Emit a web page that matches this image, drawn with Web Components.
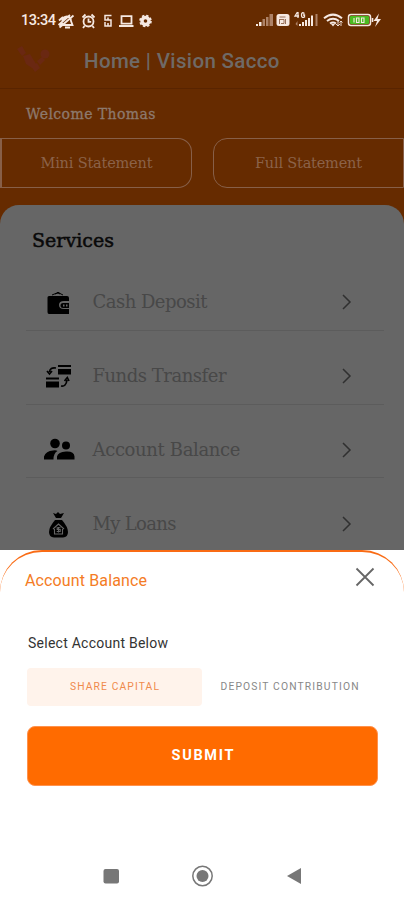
<!DOCTYPE html>
<html lang="en"><head><meta charset="utf-8"><title>Vision Sacco</title>
<style>
html,body{margin:0;height:900px;overflow:hidden;background:#fff}
body{font-family:Roboto,"Liberation Sans",sans-serif}
</style></head><body><sacco-app></sacco-app>
<script>
const define = (name, html, ready) => customElements.define(name, class extends HTMLElement {
  connectedCallback() {
    if (this.shadowRoot) return;
    this.attachShadow({mode: 'open'}).innerHTML = html;
    if (ready) ready(this, this.shadowRoot);
  }
});

/* One line of text whose tracking is spread to a given width. */
define('fit-text', `<style>:host{display:block;white-space:nowrap;line-height:1}
:host([slab]){font-family:"Roboto Slab","DejaVu Serif",serif}
span{display:inline-block}</style><span><slot></slot></span>`, (el, root) => {
  const s = root.querySelector('span');
  const target = +el.getAttribute('w'), n = el.textContent.length;
  const gap = (target - s.getBoundingClientRect().width) / (n - 1);
  s.style.letterSpacing = gap + 'px';
  s.style.marginRight = -gap + 'px';
});

define('status-bar', `<style>:host{display:flex;justify-content:space-between;align-items:center;height:40px;padding:0 20px 0 21px;box-sizing:border-box;color:#f6e9e2}
.l,.r{display:flex;align-items:center}fit-text{font-size:14.5px;font-weight:500;padding-top:2px}svg{display:block;fill:none;stroke:#f6e9e2}.l svg{margin-top:2px}.r{padding-top:1px}</style>
<div class="l"><fit-text w="35">13:34</fit-text>
<svg width="96" height="18" viewBox="0 0 96 18" stroke-width="1.8">
<path d="M5 13Q6.500 11 6.500 8Q7 5 11 4.500Q15 5 15 9L16.500 13ZM9 15.500h5M3.500 15.500L17.500 3.500M2.500 13L14 3M3 8.500L7 5"/>
<circle cx="32.500" cy="9.500" r="5"/><path d="M32.500 6.500v3.300h2.700M26.500 5.500l3-3M38.500 5.500l-3-3M28.500 14l-1.500 2M36.500 14l1.500 2"/>
<path d="M55.500 3.500h-6.500v4.500h6v6h-6v-4M52 5.500v3M52 11v3" stroke-width="1.500"/>
<path d="M65.500 4.200h10v7.500h-10zM63 14h14.500"/>
<circle cx="89.500" cy="9" r="3.500" stroke-width="3.400"/><circle cx="89.500" cy="9" r="5.400" stroke-width="1.800" stroke-dasharray="2.400 1.840"/></svg></div>
<div class="r"><svg width="129" height="22" viewBox="0 0 129 22">
<g stroke="none" fill="#f6e9e2"><path d="M1 16h2v-2H1zM4 16h2.500v-4H4z"/><path d="M7.500 16h2.500V9H7.500zM11 16h2.500V7H11zM14.500 16H18V4h-3.500z" fill="#ad8267"/>
<rect x="21.500" y="4" width="13" height="12" rx="2.500"/>
<path d="M44 16h2v-2h-2zM47 16h2v-4h-2zM50 16h2v-6h-2zM53 16h2V8h-2zM56 16h2V5.500h-2z"/><path d="M60.500 16h2V4h-2z" fill="#ad8267"/>
<path d="M40.500 14l2-3v5z" fill="#ad8267"/>
<path d="M124 3.500l-5.500 7.500h3.500l-2 6 6-8h-3.500z"/></g>
<path d="M24.500 7h6M25 9.500h4v4h-3M30.500 9v5M24.500 9v5" stroke="#98715a"/>
<path d="M42.500 2l-2.500 4h4M43 2v6M49.500 3.500q-3-2-3 1.500t3 2v-2h-1.500" stroke-width="1.300"/>
<path d="M69 8.200Q78 1 87 8.200M72 11Q78 6.500 84 11M75 13.500q3-2.200 6 0" stroke-width="2"/><path d="M76 14h4l-2 2.500z" fill="#f6e9e2" stroke="none"/><path d="M83 10v6M81 14l2 2 2-2M86 16v-5M84.500 12.500l1.500-1.500 1.500 1.500" stroke-width=".9"/>
<rect x="93.500" y="4.500" width="22" height="11" rx="2.500" stroke-width="1.500"/><rect x="95" y="6" width="19" height="8" rx="1" fill="#4abb20" stroke="none"/><path d="M117.500 8v4" stroke-width="1.600"/>
<path d="M99 8v4.500M101.500 8h2.500v4.500h-2.500zM106.500 8h2.500v4.500h-2.500z" stroke-width="1.100"/></svg></div>`);

define('app-header', `<style>:host{display:block;height:89px;box-sizing:border-box;background:#662b00;border-bottom:1px solid #592400}
.row{display:flex;align-items:center;height:42px}svg{display:block;margin-left:17px;width:67px}fit-text{font-size:20.500px;font-weight:500;color:#6f6a67}</style>
<status-bar></status-bar><div class="row"><svg height="34" viewBox="0 0 67 34"><g fill="#6a2812"><path d="M0 5l5-3 4 7-4 3zM6 12l7-2 6 10-4 4-6-4zM14 22l6-3 3 5-5 4z"/><circle cx="28" cy="10" r="4.500"/><path d="M20 17l5-4 3 3-5 5z"/></g></svg><fit-text w="195.500">Home | Vision Sacco</fit-text></div>`);

define('statement-button', `<style>:host{display:flex;align-items:center;justify-content:center;box-sizing:border-box;height:50px;border:1.500px solid #875f48;font-size:14.500px;color:#8b6249}
:host([left]){width:192px;border-radius:0 14px 14px 0;border-left-width:2px}:host([right]){width:191px;border-radius:14px 0 0 14px;border-right-width:1px}</style><slot></slot>`);

const icons = {
deposit:'<path d="M5 9h18q2 0 2 2v3h-5q-5 0-5 4t5 4h5v5H5q-1.500 0-1.500-2V10.500Q3.500 9 5 9z"/><path d="M8 8l6-2.500L19 8M11 7l3-1 2 1M13 5.500h2l1 1" fill="none" stroke="#000"/><path d="M19 16h6v5h-6q-2.500 0-2.500-2.500T19 16zm0 1.500v2h1.500v-2zm3 0v2h1.500v-2z" fill-rule="evenodd"/>',
transfer:'<rect x="14" y="4" width="13" height="2"/><rect x="14" y="8" width="13" height="5.500"/><rect x="2" y="16.500" width="13" height="2"/><rect x="2" y="20.500" width="13" height="6"/><path d="M12 7Q6 6 5.500 11M3 10l2.500 3L8 10M17 25q5 1 6-6M20.500 20l2.800-3.500L25 20" fill="none" stroke="#000" stroke-width="1.700"/>',
people:'<circle cx="11" cy="8.500" r="4.800"/><circle cx="22" cy="10.500" r="4"/><path d="M0 24.500v-3Q2 16 9 15.500q3-.500 4.500.500-4 2-4 8.500zM13 24.500v-3q1-4.500 9-5T30.500 21.500v3z"/>',
loans:'<path d="M9 4l3 1 2-2 2 2 4-1-3 5h-5z"/><path d="M11 11h7Q24 18 24 23t-5 5.500h-9Q5 28 5 23t6-12z"/><path d="M9 20l5.500-5 5.500 5M10.500 20v5h8v-5M14.500 18v5.500M12.700 22.500h3.500v-2h-3v-1.800h3.300" fill="none" stroke="#666" stroke-width="1.100"/>'};

define('service-row', `<style>:host{display:flex;align-items:center;box-sizing:border-box;height:55.800px;margin:0 20px 18px 26px;padding:0 31px 0 17.500px;border-bottom:1px solid #5c5c5c;color:#484848;font-size:18px}
.i{width:49px}.i svg{overflow:visible;display:block}.t{flex:1}svg{display:block}</style>
<div class="i"><svg width="30" height="30" viewBox="0 0 30 30"></svg></div><div class="t"><slot></slot></div><svg width="12" height="18" viewBox="0 0 12 18" fill="none" stroke="#303030" stroke-width="1.500"><path d="M2 2l7 7-7 7"/></svg>`,
(el, root) => { root.querySelector('.i svg').innerHTML = icons[el.getAttribute('icon')]; });

define('account-option', `<style>:host{display:flex;align-items:center;justify-content:center;width:175px;height:38px;border-radius:4px;font-size:10.300px;color:#888}:host([selected]){background:#fff3eb;color:#ef8a4b}</style><slot></slot>`);

define('account-sheet', `<style>:host{display:block;height:350px;background:#fff}
.panel{height:300px;box-sizing:border-box;border-top:2.500px solid #f96b14;border-radius:42px 42px 0 0}
.head{display:flex;justify-content:space-between;align-items:center;padding:17px 29px 0 25px;height:24px;color:#f47c25;font-size:16px}
.body{padding:43px 26px 0 27px;color:#333;font-size:14px}.opts{display:flex;margin-top:18px}
.submit{display:flex;align-items:center;justify-content:center;height:60px;box-sizing:border-box;margin-top:20px;background:#ff6b00;border:1px solid #ff924d;border-radius:8px;color:#fff;font-size:14.500px;font-weight:700}
nav{height:50px;display:flex;justify-content:center}svg{display:block}.sel{padding-left:1px}</style>
<div class="panel"><div class="head"><fit-text w="122">Account Balance</fit-text><svg width="20" height="20" viewBox="0 0 20 20" style="margin-top:-8px" stroke="#666" stroke-width="1.800"><path d="M1.500 1.500l17 17M18.500 1.500l-17 17"/></svg></div>
<div class="body"><fit-text class="sel" w="140">Select Account Below</fit-text><div class="opts"><account-option selected><fit-text w="89">SHARE CAPITAL</fit-text></account-option><account-option><fit-text w="138">DEPOSIT CONTRIBUTION</fit-text></account-option></div><div class="submit"><fit-text w="62">SUBMIT</fit-text></div></div></div>
<nav><svg width="404" height="50" viewBox="0 0 404 50"><rect x="103.500" y="19" width="15.500" height="14.500" rx="2" fill="#777"/><circle cx="202.500" cy="26" r="9.700" fill="none" stroke="#777" stroke-width="1.500"/><circle cx="202.500" cy="26" r="6" fill="#777"/><path d="M301 18v16l-14-8z" fill="#777"/></svg></nav>`);

define('sacco-app', `<style>:host{display:flex;flex-direction:column;width:404px;height:900px;overflow:hidden;background:#662b00}
.home{height:461px;flex:none;overflow:hidden}.welcome{font-size:14px;color:#8d796d;padding:18px 0 0 26px;-webkit-text-stroke:.3px}
.btns{display:flex;justify-content:space-between;margin-top:17px}.card{margin-top:17px;height:360px;background:#666;border-radius:19px 19px 0 0;padding-top:26px}
.title{font-size:19px;color:#090909;padding:0 0 25px 32px;-webkit-text-stroke:.5px}account-sheet{flex:none}</style>
<app-header></app-header><div class="home"><fit-text slab class="welcome" w="129.500">Welcome Thomas</fit-text>
<div class="btns"><statement-button left><fit-text slab w="112">Mini Statement</fit-text></statement-button><statement-button right><fit-text slab w="107">Full Statement</fit-text></statement-button></div>
<div class="card"><fit-text slab class="title" w="82">Services</fit-text>
<service-row icon="deposit"><fit-text slab w="115">Cash Deposit</fit-text></service-row><service-row icon="transfer"><fit-text slab w="134">Funds Transfer</fit-text></service-row><service-row icon="people"><fit-text slab w="148">Account Balance</fit-text></service-row><service-row icon="loans"><fit-text slab w="84">My Loans</fit-text></service-row></div></div><account-sheet></account-sheet>`);
</script></body></html>
